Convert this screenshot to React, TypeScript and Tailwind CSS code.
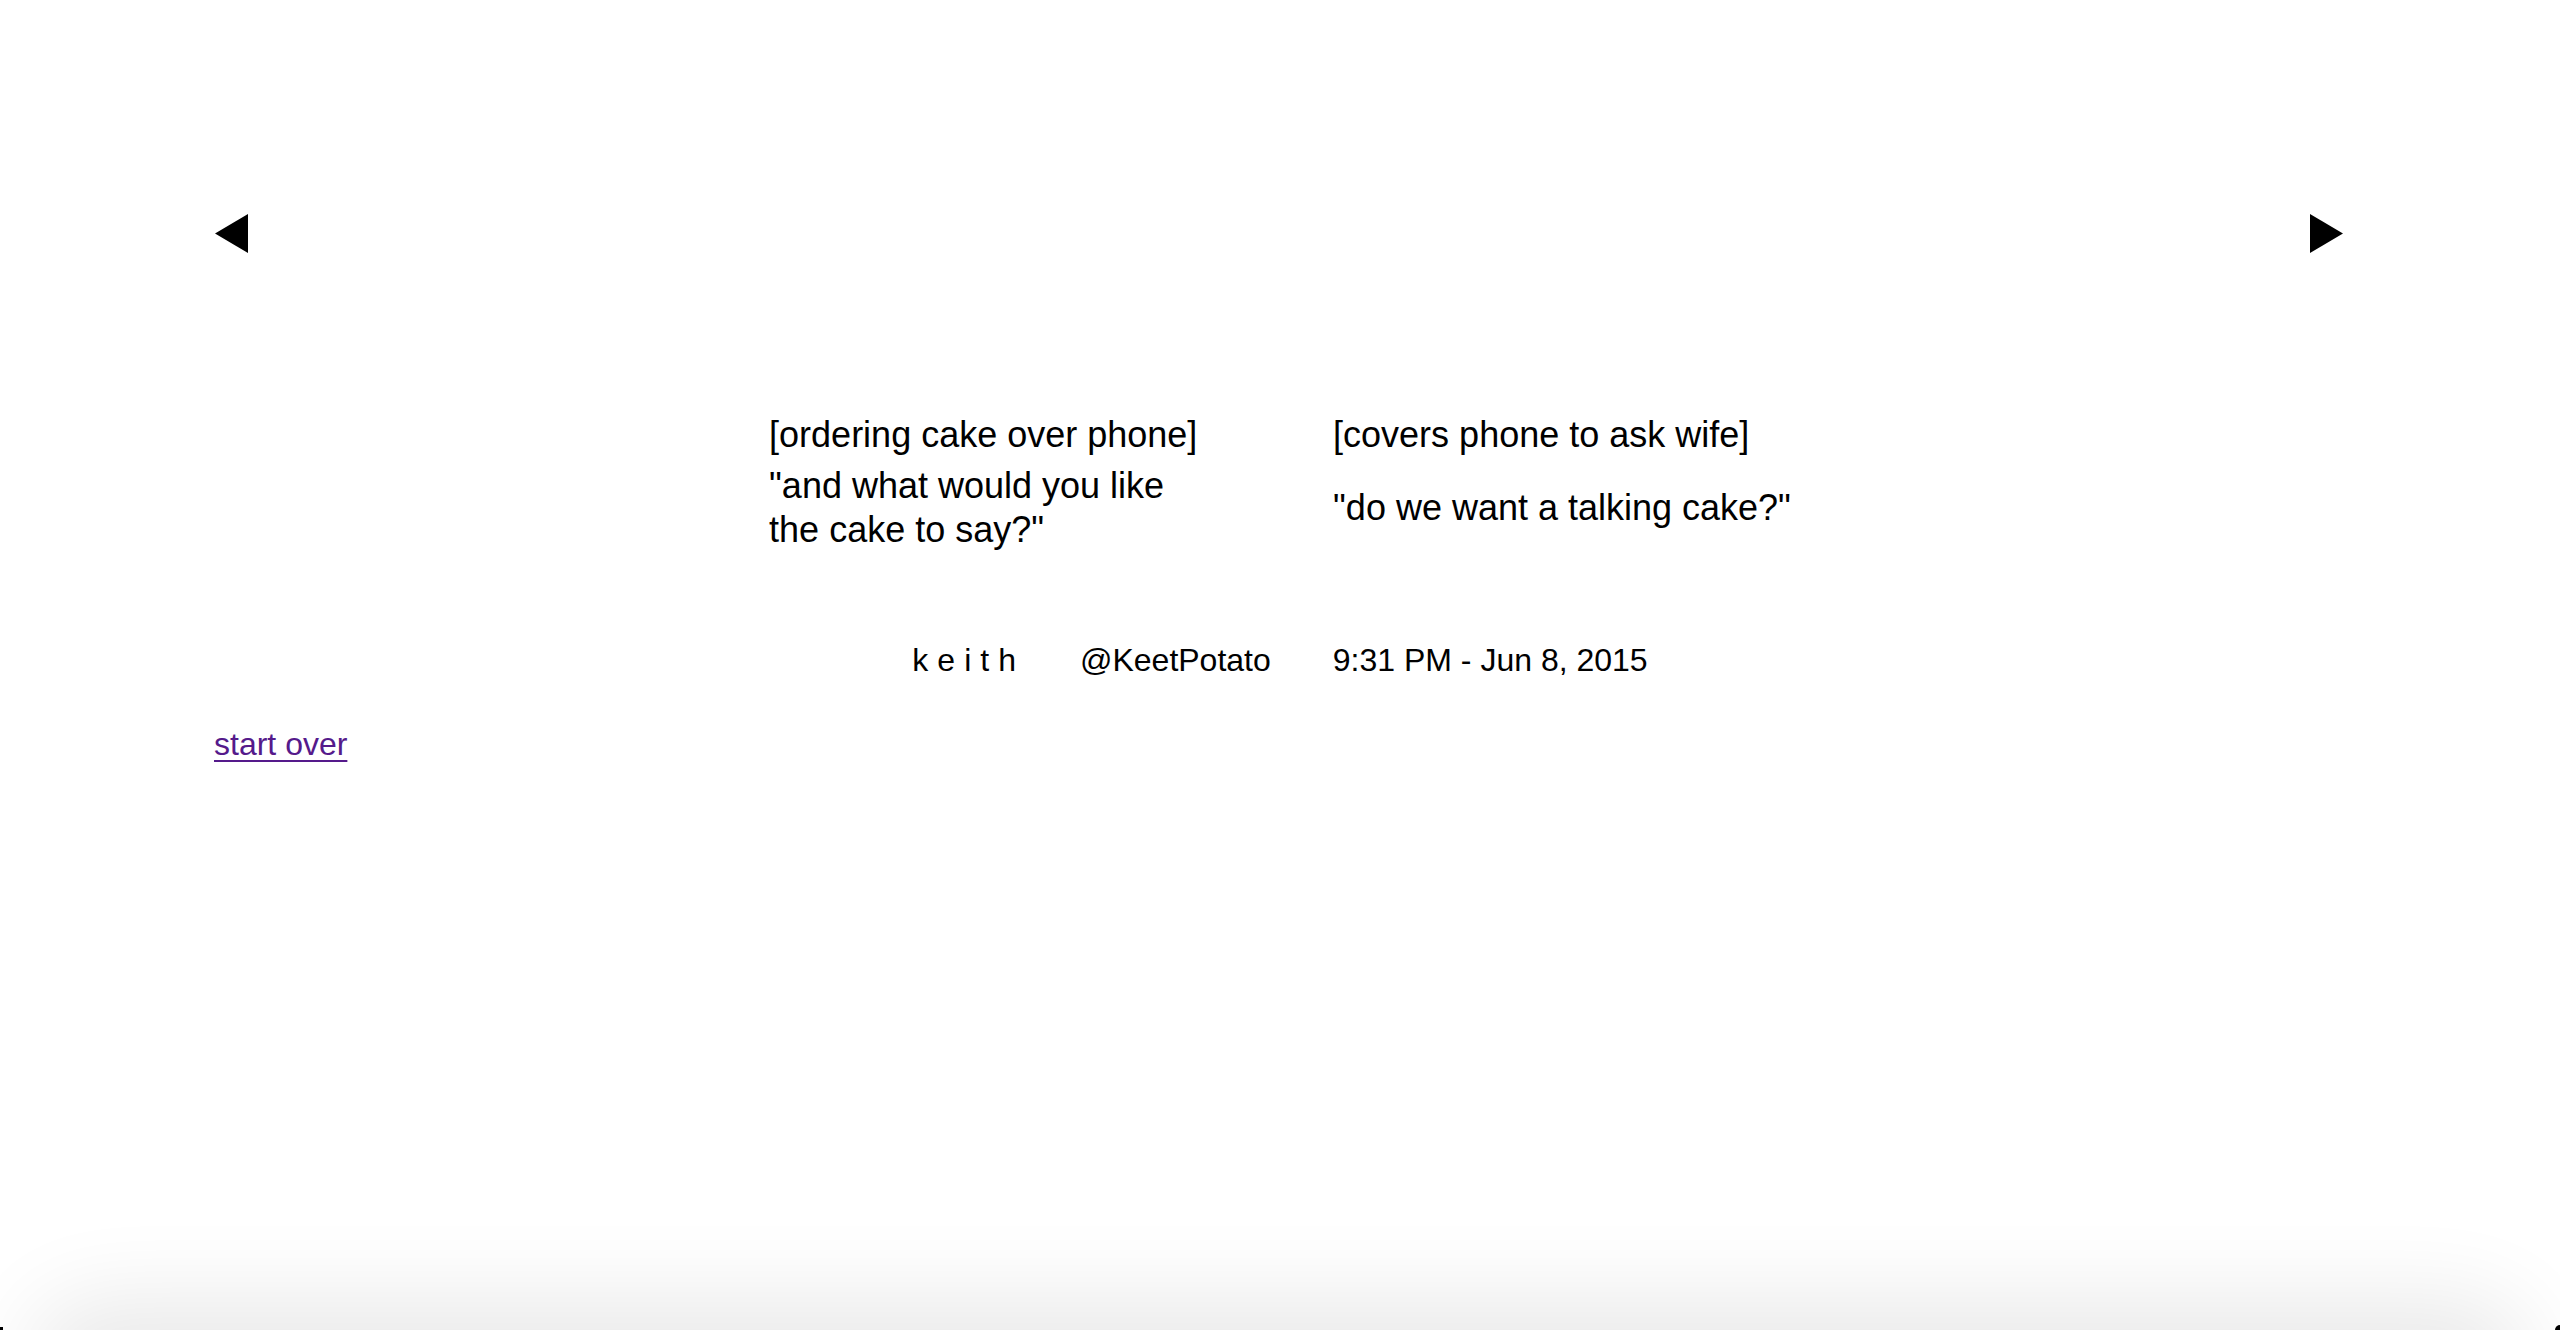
// Single tweet card, slideshow style: arrows on top, two-panel joke,
// byline, and a "start over" link underneath.

type Panel = {
  caption: string;
  quote: string;
};

const PANELS: Panel[] = [
  { caption: "[ordering cake over phone]", quote: "\"and what would you like the cake to say?\"" },
  { caption: "[covers phone to ask wife]", quote: "\"do we want a talking cake?\"" },
];

const TWEET = {
  name: "keith",
  handle: "@KeetPotato",
  time: "9:31 PM - Jun 8, 2015",
};

function Arrow({ dir }: { dir: "left" | "right" }): React.ReactElement {
  // Plain filled triangle, same as the ◀ / ▶ glyphs.
  const points = dir === "left" ? "0,19.5 33,0 33,39" : "0,0 33,19.5 0,39";
  return (
    <button className="block h-[39px] w-[33px] cursor-pointer">
      <svg width="33" height="39" viewBox="0 0 33 39">
        <polygon points={points} fill="#000" />
      </svg>
    </button>
  );
}

export default function App(): React.ReactElement {
  return (
    <div
      className="relative min-h-[1330px] w-full overflow-hidden bg-white text-black"
      style={{ fontFamily: '"Liberation Sans", Arial, Helvetica, sans-serif' }}
    >
      <div className="px-[215px] pt-[214px]">
        {/* Prev / next arrows */}
        <div className="flex items-start justify-between pr-[2px]">
          <Arrow dir="left" />
          <Arrow dir="right" />
        </div>

        {/* Two panels, laid out as a 2x2 grid so the quotes line up */}
        <div className="mt-[160px] flex justify-center">
          <div className="grid grid-cols-[440px_auto] items-center gap-x-[124px] gap-y-[7px] text-[36px] leading-[44px]">
            {PANELS.map((p) => (
              <div key={p.caption}>{p.caption}</div>
            ))}
            {PANELS.map((p) => (
              <div key={p.quote}>{p.quote}</div>
            ))}
          </div>
        </div>

        {/* Byline */}
        <div className="mt-[89px] flex justify-center text-[32px] leading-[38px]">
          <span className="tracking-[9px]">{TWEET.name}</span>
          <span className="ml-[55px]">{TWEET.handle}</span>
          <span className="ml-[62px]">{TWEET.time}</span>
        </div>

        <div className="-ml-px mt-[46px] text-[32px] leading-[38px]">
          <a href="#" className="text-[#551a8b] underline decoration-[2px] underline-offset-[5px]">
            start over
          </a>
        </div>
      </div>

      {/* Window bottom shading from the screenshot */}
      <div className="pointer-events-none absolute -bottom-[70px] left-[60px] right-[60px] h-[70px] rounded-[60px] shadow-[0_0_90px_30px_rgba(0,0,0,0.09)]" />
      <div className="pointer-events-none absolute bottom-0 left-0 h-[3px] w-[3px] bg-black" />
      <div className="pointer-events-none absolute bottom-0 right-0 h-[5px] w-[5px] rounded-tl-full bg-black" />
    </div>
  );
}
